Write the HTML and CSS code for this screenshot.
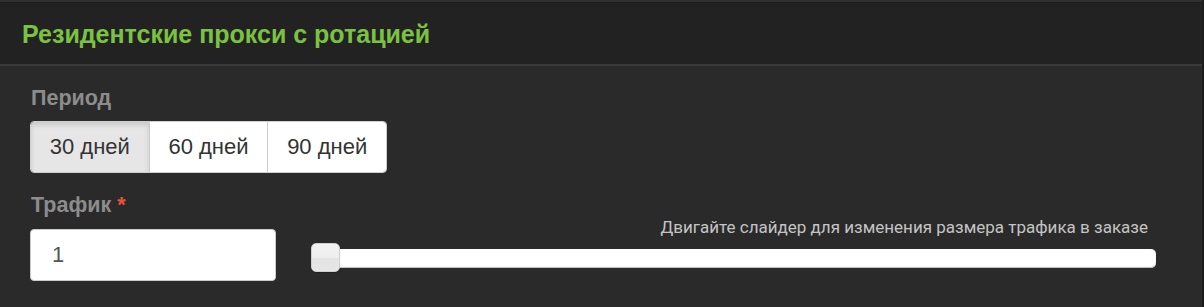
FILE: index.html
```html
<!DOCTYPE html>
<html lang="ru">
<head>
<meta charset="utf-8">
<link rel="stylesheet" href="styles.css">
</head>
<body>
<div class="page">
  <div class="topstrip"></div>
  <div class="header">
    <h1 class="title">Резидентские прокси с ротацией</h1>
  </div>
  <div class="content">
    <div class="label">Период</div>
    <div class="btn-group">
      <button class="btn active">30 дней</button>
      <button class="btn">60 дней</button>
      <button class="btn">90 дней</button>
    </div>
    <div class="label label-traffic">Трафик <span class="req">*</span></div>
    <div class="traffic-row">
      <div class="input">1</div>
      <div class="slider-col">
        <div class="hint">Двигайте слайдер для изменения размера трафика в заказе</div>
        <div class="slider">
          <div class="track"></div>
          <div class="handle"></div>
        </div>
      </div>
    </div>
  </div>
</div>
</body>
</html>
```
FILE: styles.css
```css
html, body {
  margin: 0;
  padding: 0;
  background: #2a2a2a;
}
.page {
  width: 1202px;
  height: 307px;
  background: #2a2a2a;
  border-right: 2px solid #1d1d1d;
  overflow: hidden;
  font-family: "Liberation Sans", Arial, sans-serif;
}
.topstrip {
  height: 2px;
  background: #303030;
  border-bottom: 1px solid #1b1b1b;
}
.header {
  height: 61px;
  background: #222222;
  border-bottom: 2px solid #3a3a3a;
  display: flex;
  align-items: center;
  padding-left: 22px;
}
.title {
  margin: 0;
  font-size: 25px;
  font-weight: bold;
  color: #7cc242;
  padding-top: 2px;
}
.content {
  padding: 20px 30px 0 30px;
}
.label {
  font-size: 21.5px;
  font-weight: bold;
  color: #8c8c8c;
  padding-left: 1px;
  line-height: 24px;
}
.req {
  color: #e8533a;
}
.btn-group {
  display: flex;
  margin-top: 11px;
  width: 357px;
  height: 52px;
  border-radius: 4px;
  overflow: hidden;
  border: 1px solid #cfcfcf;
  box-sizing: border-box;
}
.btn {
  flex: 1;
  border: none;
  border-left: 1px solid #cccccc;
  background: #ffffff;
  font-family: "Liberation Sans", Arial, sans-serif;
  font-size: 22px;
  color: #333333;
  padding: 0;
  margin: 0;
}
.btn:first-child {
  border-left: none;
}
.btn.active {
  background: #e6e6e6;
  box-shadow: inset 0 3px 5px rgba(0,0,0,0.125);
}
.label-traffic {
  margin-top: 20px;
}
.traffic-row {
  display: flex;
  margin-top: 12px;
  align-items: flex-start;
}
.input {
  width: 246px;
  height: 52px;
  box-sizing: border-box;
  background: #ffffff;
  border: 1px solid #cccccc;
  border-radius: 4px;
  padding-left: 21px;
  font-size: 22px;
  color: #555555;
  line-height: 50px;
  flex: none;
}
.slider-col {
  margin-left: 35px;
  width: 845px;
  margin-top: -12px;
}
.hint {
  text-align: right;
  padding-right: 8px;
  font-family: Roboto, "Liberation Sans", sans-serif;
  font-size: 17px;
  color: #c4c4c4;
  line-height: 20px;
}
.slider {
  position: relative;
  height: 30px;
  margin-top: 5px;
}
.track {
  position: absolute;
  left: 4px;
  right: 0;
  top: 7px;
  height: 19px;
  background: #ffffff;
  border-radius: 5px;
  box-shadow: inset 0 -1px 1px #b9b9b9;
}
.handle {
  position: absolute;
  left: 0;
  top: 1px;
  width: 29px;
  height: 29px;
  box-sizing: border-box;
  border: 1px solid #d0d0d0;
  border-radius: 5px;
  background: linear-gradient(#f2f2f2 0%, #eeeeee 50%, #e4e4e4 51%, #e6e6e6 100%);
  box-shadow: 0 1px 1px rgba(0,0,0,0.2);
}
```
